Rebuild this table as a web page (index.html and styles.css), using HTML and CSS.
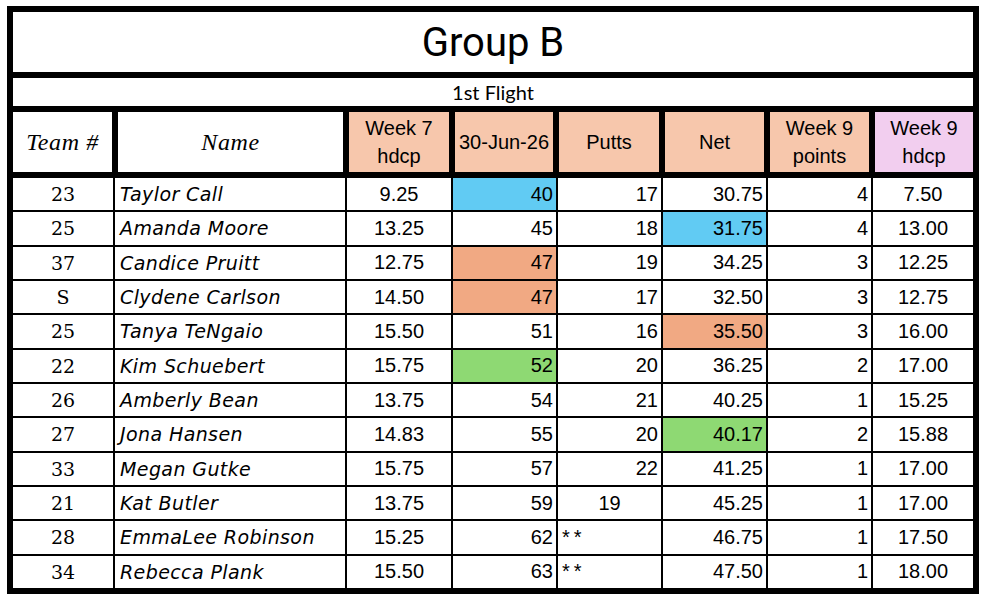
FILE: index.html
```html
<!DOCTYPE html>
<html>
<head>
<meta charset="utf-8">
<link rel="stylesheet" href="styles.css">
</head>
<body>
<div class="sheet">
  <div class="title">Group B</div>
  <div class="flight">1st Flight</div>
  <div class="head">
    <div class="hc script">Team #</div>
    <div class="hc script">Name</div>
    <div class="hc peach">Week 7<br>hdcp</div>
    <div class="hc peach">30-Jun-26</div>
    <div class="hc peach">Putts</div>
    <div class="hc peach">Net</div>
    <div class="hc peach">Week 9<br>points</div>
    <div class="hc pink">Week 9<br>hdcp</div>
  </div>
  <div class="rows">
    <div class="cell team">23</div><div class="cell name">Taylor Call</div><div class="cell c">9.25</div><div class="cell r blue">40</div><div class="cell r">17</div><div class="cell r">30.75</div><div class="cell r">4</div><div class="cell c">7.50</div>
    <div class="cell team">25</div><div class="cell name">Amanda Moore</div><div class="cell c">13.25</div><div class="cell r">45</div><div class="cell r">18</div><div class="cell r blue">31.75</div><div class="cell r">4</div><div class="cell c">13.00</div>
    <div class="cell team">37</div><div class="cell name">Candice Pruitt</div><div class="cell c">12.75</div><div class="cell r orange">47</div><div class="cell r">19</div><div class="cell r">34.25</div><div class="cell r">3</div><div class="cell c">12.25</div>
    <div class="cell team">S</div><div class="cell name">Clydene Carlson</div><div class="cell c">14.50</div><div class="cell r orange">47</div><div class="cell r">17</div><div class="cell r">32.50</div><div class="cell r">3</div><div class="cell c">12.75</div>
    <div class="cell team">25</div><div class="cell name">Tanya TeNgaio</div><div class="cell c">15.50</div><div class="cell r">51</div><div class="cell r">16</div><div class="cell r orange">35.50</div><div class="cell r">3</div><div class="cell c">16.00</div>
    <div class="cell team">22</div><div class="cell name">Kim Schuebert</div><div class="cell c">15.75</div><div class="cell r green">52</div><div class="cell r">20</div><div class="cell r">36.25</div><div class="cell r">2</div><div class="cell c">17.00</div>
    <div class="cell team">26</div><div class="cell name">Amberly Bean</div><div class="cell c">13.75</div><div class="cell r">54</div><div class="cell r">21</div><div class="cell r">40.25</div><div class="cell r">1</div><div class="cell c">15.25</div>
    <div class="cell team">27</div><div class="cell name">Jona Hansen</div><div class="cell c">14.83</div><div class="cell r">55</div><div class="cell r">20</div><div class="cell r green">40.17</div><div class="cell r">2</div><div class="cell c">15.88</div>
    <div class="cell team">33</div><div class="cell name">Megan Gutke</div><div class="cell c">15.75</div><div class="cell r">57</div><div class="cell r">22</div><div class="cell r">41.25</div><div class="cell r">1</div><div class="cell c">17.00</div>
    <div class="cell team">21</div><div class="cell name">Kat Butler</div><div class="cell c">13.75</div><div class="cell r">59</div><div class="cell c">19</div><div class="cell r">45.25</div><div class="cell r">1</div><div class="cell c">17.00</div>
    <div class="cell team">28</div><div class="cell name">EmmaLee Robinson</div><div class="cell c">15.25</div><div class="cell r">62</div><div class="cell l stars">**</div><div class="cell r">46.75</div><div class="cell r">1</div><div class="cell c">17.50</div>
    <div class="cell team">34</div><div class="cell name">Rebecca Plank</div><div class="cell c">15.50</div><div class="cell r">63</div><div class="cell l stars">**</div><div class="cell r">47.50</div><div class="cell r">1</div><div class="cell c">18.00</div>
  </div>
</div>
</body>
</html>
```
FILE: styles.css
```css
html, body {
  margin: 0;
  padding: 0;
  background: #ffffff;
}
body {
  padding: 6px 0 0 7px;
  font-family: "Liberation Sans", Arial, sans-serif;
  color: #000;
}
.sheet {
  width: 960px;
  border: 6px solid #000;
  background: #fff;
}
.title {
  height: 60px;
  border-bottom: 6px solid #000;
  display: flex;
  align-items: center;
  justify-content: center;
  font-family: Roboto, "Liberation Sans", sans-serif;
  font-size: 40px;
}
.flight {
  height: 28px;
  border-bottom: 6px solid #000;
  display: flex;
  align-items: center;
  justify-content: center;
  font-family: Lato, "Liberation Sans", sans-serif;
  font-size: 20px;
}
.head {
  display: grid;
  grid-template-columns: 99px 225px 100px 98px 100px 99px 99px 98px;
  column-gap: 6px;
  height: 60px;
  background: #000;
  border-bottom: 6px solid #000;
}
.hc {
  background: #fff;
  display: flex;
  align-items: center;
  justify-content: center;
  text-align: center;
  font-size: 20px;
  line-height: 28px;
}
.hc.peach { background: #f7c7ac; }
.hc.pink { background: #f2ceef; }
.hc.script {
  font-family: "Liberation Serif", "Times New Roman", serif;
  font-style: italic;
  font-size: 24px;
  letter-spacing: 0.6px;
}
.rows {
  display: grid;
  grid-template-columns: 100px 230px 104px 103px 103px 103px 103px 100px;
  grid-template-rows: repeat(12, 1fr);
  gap: 2px;
  height: 410px;
  background: #000;
}
.cell {
  background: #fff;
  display: flex;
  align-items: center;
  font-size: 20px;
  padding: 0 3px;
  white-space: nowrap;
}
.cell.c { justify-content: center; }
.cell.r { justify-content: flex-end; }
.cell.l { justify-content: flex-start; }
.cell.team {
  justify-content: center;
  font-family: "DejaVu Serif", "Liberation Serif", serif;
  font-size: 19px;
}
.cell.name {
  font-family: "DejaVu Sans", sans-serif;
  font-weight: 200;
  font-style: italic;
  font-size: 19px;
  letter-spacing: 0.4px;
  padding-left: 5px;
}
.cell.stars {
  font-size: 20px;
  letter-spacing: 4px;
  padding-left: 4px;
}
.blue { background: #61cbf3; }
.orange { background: #f1a983; }
.green { background: #8ed973; }
```
